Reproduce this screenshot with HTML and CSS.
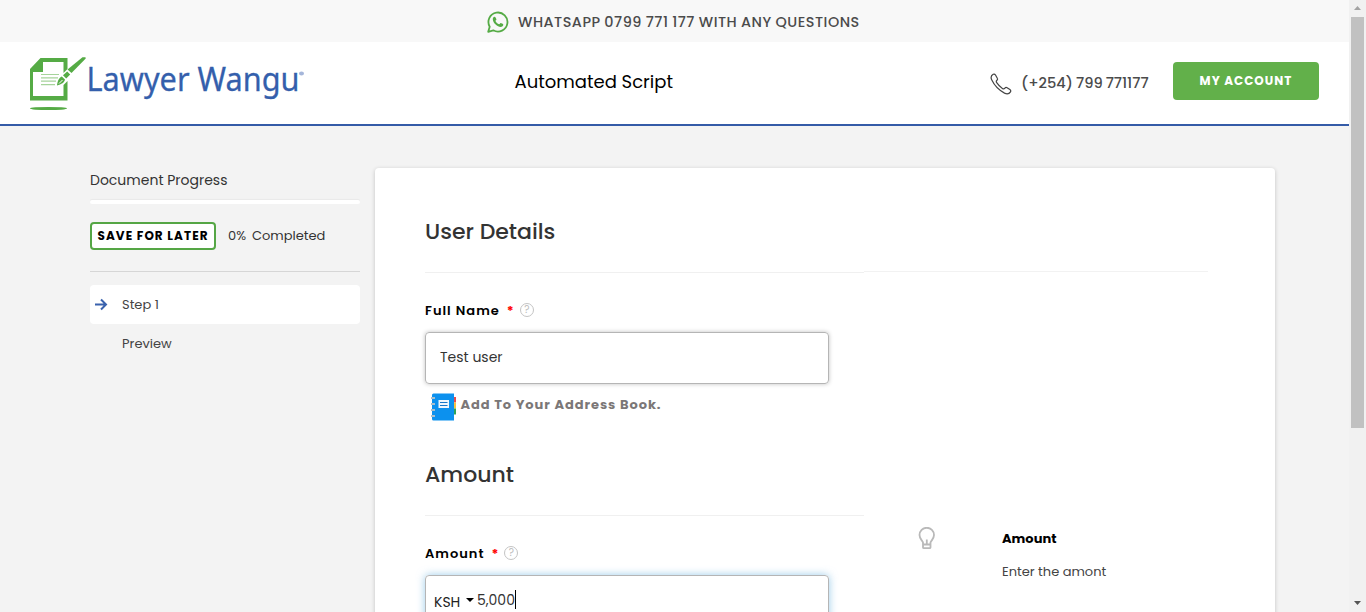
FILE: index.html
```html
<!DOCTYPE html>
<html lang="en">
<head>
<meta charset="utf-8">
<title>Lawyer Wangu</title>
<link rel="stylesheet" href="styles.css">
</head>
<body>
<div class="window">
<div class="page">
  <div class="topbar">
    <svg class="whatsapp" viewBox="0 0 22 22" width="22" height="22"><path d="M1.2 20.8 2.7 15.7A9.5 9.5 0 1 1 6.3 19.3Z" fill="none" stroke="#55ab45" stroke-width="1.800" stroke-linejoin="round"/><path d="M7.5 5.800c-.9.1-1.800 1.200-1.700 2.600.3 3.500 4.700 7.500 7.800 7.500 1.500 0 2.800-1 2.700-2.500 0-.4-2.300-1.600-2.700-1.500-.5.1-.9 1.400-1.500 1.300-1.500-.4-3.100-2-3.600-3.300-.1-.6.900-.9.900-1.500C9.400 8 8.400 5.700 7.500 5.800Z" fill="#55ab45"/></svg>
    <span class="topbar-text">WHATSAPP 0799 771 177 WITH ANY QUESTIONS</span>
  </div>
  <header class="header">
    <svg class="logo" viewBox="0 0 280 60" width="280" height="60" role="img" aria-label="Lawyer Wangu">
      <path d="M12.500 4H39.500V15L35.500 19V8H15V18H5V42H35.500V31L39.500 27V46.500H2V15Z" fill="#55ab45"/>
      <path d="M13 20.500H31M13 23.800H30M13 27.200H28M13 30.700H27" stroke="#a6d49b" stroke-width="1.200"/>
      <path d="M57 3.200c.9 0 .9 1 .5 1.500L43.500 19 39.500 15.500 54.500 3.200Z" fill="#55ab45"/>
      <path d="M39.200 17.400 42.200 20.400 38.200 24.400 35 21.200ZM33.800 22.400 37 25.600C36.500 28.500 33.500 30.500 29 31.500 29.500 27 31 23.500 33.800 22.400Z" fill="#55ab45"/><path d="M31 29.500 34.500 26" stroke="#fff"/>
      <ellipse cx="20.500" cy="54.500" rx="18.500" ry="1.600" fill="#55ab45"/>
      <text class="logo-text" x="58.500" y="37" textLength="213" lengthAdjust="spacingAndGlyphs">Lawyer Wangu</text>
      <ellipse cx="273.500" cy="19.500" rx="2.500" ry="2" fill="#a5b6da"/>
    </svg>
    <span class="title">Automated Script</span>
    <div class="account">
      <svg class="phone" viewBox="0 0 22 22" width="22" height="22"><path d="M3.200 1.300C1 2.500.6 4.600 1.800 7.100 4.500 12.700 9 17.300 14.500 20.100c2.500 1.200 4.700.7 6-1.300.5-.8.2-1.600-.6-2.200l-2.800-1.900c-.9-.5-1.600-.3-2.200.4-.7.9-1.500 1-2.500.3C9.900 13.700 8.200 12 6.700 9.700c-.7-1-.5-1.800.3-2.500.7-.6.8-1.200.3-2L5.500 2C4.900 1.100 4.100.8 3.200 1.300Z" fill="none" stroke="#444" stroke-width="1.200"/></svg>
      <span class="phone-number">(+254) 799 771177</span>
      <a class="account-button"><span>MY ACCOUNT</span></a>
    </div>
  </header>
  <main class="main">
    <aside class="sidebar">
      <div class="progress-title"><span>Document Progress</span></div>
      <div class="progress-bar"></div>
      <div class="save-row">
        <a class="save-button"><span>SAVE FOR LATER</span></a>
        <span class="percent">0%</span><span class="completed">Completed</span>
      </div>
      <nav class="steps">
        <a class="step step-active"><svg class="arrow" viewBox="0 0 14 14" width="14" height="14"><path d="M1 6.500H12M7 1.500 12 6.500 7 11.500" fill="none" stroke="#3a62ad" stroke-width="2"/></svg><span>Step 1</span></a>
        <a class="step"><span>Preview</span></a>
      </nav>
    </aside>
    <section class="card">
      <div class="form">
        <div class="section-head"><span>User Details</span></div>
        <div class="label"><span>Full Name</span><b class="star">*</b><i class="help">?</i></div>
        <div class="input"><span>Test user</span></div>
        <div class="address">
          <svg viewBox="0 0 26 28" width="26" height="28"><path d="M20 4h5v5.500h-5z" fill="#e94b4b"/><path d="M20 9.500h5v6h-5z" fill="#f5c242"/><path d="M20 15.500h5v6h-5z" fill="#2ea25a"/><path d="M2.500.5H23V27.500H2.500A1.500 1.500 0 0 1 1 26V2A1.500 1.500 0 0 1 2.500.5Z" fill="#0c91ee"/><path d="M0 5H4M0 11H4M0 17H4M0 23H4" stroke="#a9bfcc" stroke-width="2"/><path d="M7.500 7h10.500v8H7.500z" fill="#eef6fd"/><path d="M9 9.500h7.500M9 12.500h7.500" stroke="#1877c9" stroke-width="1.200"/></svg>
          <span>Add To Your Address Book.</span>
        </div>
        <div class="section-head section-amount"><span>Amount</span></div>
        <div class="label"><span>Amount</span><b class="star">*</b><i class="help">?</i></div>
        <div class="input input-focus"><span class="currency">KSH</span><i class="drop"></i><span>5,000</span><i class="caret"></i></div>
      </div>
      <div class="hints">
        <div class="hint">
          <svg class="bulb" viewBox="0 0 18 24" width="18" height="24"><path d="M5 17V15.500C4.500 13.500 1.500 12 1.500 8A7.200 7.200 0 0 1 16 8C16 12 13 13.500 12.500 15.500V17.500H5V20.500Q5 21.200 6 21.200H11.500Q12.500 21.200 12.500 20.500V17.500M8.800 12.500V17" fill="none" stroke="#b9b9b9" stroke-width="1.800"/></svg>
          <div class="hint-body"><div class="hint-title"><span>Amount</span></div><div class="hint-text"><span>Enter the amont</span></div></div>
        </div>
      </div>
    </section>
  </main>
</div>
<div class="scrollbar"><i class="scroll-up"></i><i class="thumb"></i><i class="scroll-down"></i></div>
</div>
</body>
</html>
```
FILE: styles.css
```css
* { box-sizing: border-box; }
body { margin: 0; height: 612px; overflow: hidden; background: #f3f3f3; color: #333; font-family: Poppins, Inter, sans-serif; font-size: 13px; }
span { white-space: nowrap; }
i, b { font-style: normal; }
.window { display: flex; height: 612px; }
.page { width: 1349px; overflow: hidden; }
.topbar { display: flex; height: 42px; background: #f8f8f8; padding-left: 487px; align-items: center; gap: 9px; }
.whatsapp { margin-top: 1px; }
.topbar-text { font-size: 14.4px; font-weight: 500; color: #4b4b4b; letter-spacing: .5px; word-spacing: -.4px; line-height: 22px; padding-top: 2px; }
.header { display: flex; height: 84px; background: #fff; border-bottom: 2px solid #345ba7; }
.logo { margin: 12px 0 0 28px; overflow: visible; }
.logo-text { font: 33px "Noto Sans", sans-serif; fill: #345fac; stroke: #345fac; stroke-width: .3px; }
.title { font-size: 18px; color: #000; line-height: 80px; width: 475px; margin-left: 206.5px; }
.account { display: flex; align-items: flex-start; padding-top: 20px; }
.phone { margin: 11px 9px 0 .5px; }
.phone-number { width: 152px; font-size: 14.6px; font-weight: 500; color: #4b4b4b; line-height: 42px; letter-spacing: 0; word-spacing: -.8px; }
.account-button { width: 146px; height: 38px; background: #62b04a; border-radius: 4px; text-align: center; font-size: 12px; font-weight: 700; color: #fff; line-height: 38px; letter-spacing: 1px; }
.main { display: flex; height: 486px; padding: 42px 0 0 90px; }
.sidebar { width: 270px; margin-right: 15px; }
.progress-title { height: 32px; line-height: 24px; font-size: 14px; }
.progress-bar { height: 4px; background: #fff; border-radius: 2px; box-shadow: 0 -1px 1px #e9e9e9; }
.save-row { display: flex; height: 68px; padding-top: 18px; border-bottom: 1px solid #d6d6d6; line-height: 28px; }
.save-button { width: 126px; height: 28px; border: 2px solid #55a645; border-radius: 4px; background: #fff; color: #000; font-size: 12px; font-weight: 700; line-height: 24px; padding-left: 5.5px; letter-spacing: 1.05px; margin-right: 12px; }
.percent { width: 24px; }
.steps { padding-top: 13px; }
.step { display: flex; align-items: center; height: 39px; padding-left: 32px; color: #444; }
.step-active { background: #fff; border-radius: 4px; padding-left: 4px; }
.arrow { margin-right: 14px; }
.card { display: flex; width: 900px; height: 470px; background: #fff; border-radius: 4px 4px 0 0; box-shadow: 0 1px 4px rgba(0,0,0,.2); padding-left: 50px; }
.form { width: 439px; }
.section-head { height: 105px; border-bottom: 1px solid #f0f0f0; font-size: 22px; font-weight: 500; line-height: 128px; color: #333; }
.section-amount { height: 95px; line-height: 107px; }
.label { display: flex; align-items: flex-start; height: 59px; padding-top: 17px; color: #000; font-weight: 600; line-height: 41px; letter-spacing: 1px; }
.star { color: #f00; font-weight: 700; margin-left: 7px; }
.help { width: 14px; height: 14px; margin: 13px 0 0 5px; border: 1px solid #c4c4c4; border-radius: 50%; color: #bbb; font-size: 10px; font-weight: 400; line-height: 12px; text-align: center; letter-spacing: 0; }
.input { display: flex; width: 404px; height: 52px; border: 1px solid #b5b5b5; border-radius: 4px; box-shadow: 0 0 4px rgba(0,0,0,.25); font-size: 14px; line-height: 48px; padding-left: 14px; color: #333; }
.input-focus { padding-left: 8px; box-shadow: 0 0 8px rgba(90,170,220,.6); }
.address { display: flex; height: 37px; padding: 9px 0 0 6px; font-weight: 700; color: #7b7777; line-height: 24px; gap: 3.5px; letter-spacing: .93px; }
.currency { line-height: 52px; color: #222; width: 28px; }
.drop { width: 8px; height: 4px; margin: 22px 3px 0 4px; background: #000; clip-path: polygon(0 0, 100% 0, 50% 100%); }
.caret { width: 1px; height: 19px; margin-top: 14px; background: #000; }
.hints { width: 344px; padding-top: 103px; }
.hint { display: flex; border-top: 1px solid #f2f2f2; padding: 256px 0 0 54px; }
.bulb { margin-top: -1px; }
.hint-body { margin-left: 66px; }
.hint-title { font-weight: 700; color: #000; line-height: 22px; height: 33px; }
.hint-text { line-height: 22px; color: #444; }
.scrollbar { width: 17px; background: #f1f1f1; display: flex; flex-direction: column; align-items: center; }
.scroll-up, .scroll-down { width: 7px; height: 4px; background: #555; clip-path: polygon(0 100%, 50% 0, 100% 100%); margin: 6px 0 7px; }
.scroll-up { background: #a3a3a3; }
.thumb { width: 13px; height: 411px; background: #c1c1c1; }
.scroll-down { clip-path: polygon(0 0, 100% 0, 50% 100%); margin: 173px 0 0; }
```
